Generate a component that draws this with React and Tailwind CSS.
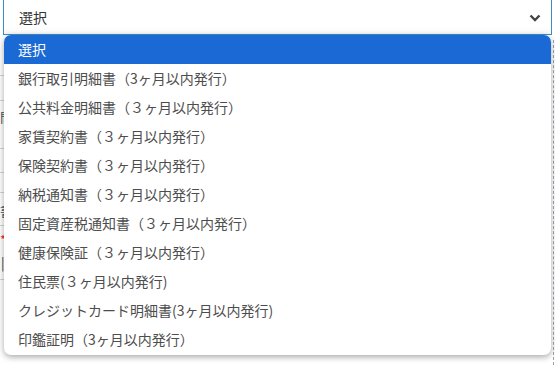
import React from "react";

const options = [
  "選択",
  "銀行取引明細書（3ヶ月以内発行）",
  "公共料金明細書（３ヶ月以内発行）",
  "家賃契約書（３ヶ月以内発行）",
  "保険契約書（３ヶ月以内発行）",
  "納税通知書（３ヶ月以内発行）",
  "固定資産税通知書（３ヶ月以内発行）",
  "健康保険証（３ヶ月以内発行）",
  "住民票(３ヶ月以内発行)",
  "クレジットカード明細書(3ヶ月以内発行)",
  "印鑑証明（3ヶ月以内発行）",
];

const App = () => {
  return (
    <div
      className="relative w-[555px] h-[365px] overflow-hidden bg-white text-[14px]"
      style={{ fontFamily: '"Noto Sans CJK JP", "Noto Sans", sans-serif' }}
    >
      {/* page behind the open list */}
      <div className="absolute left-0 top-[40px] w-[12px] flex flex-col text-[13px] text-gray-600">
        <div className="h-[36px] border-b border-gray-300" />
        <div className="h-[25px] border-b border-gray-300" />
        <div className="h-[48px] border-b border-gray-300 leading-[30px] pt-[1px]">問</div>
        <div className="h-[24px] border-b border-gray-300" />
        <div className="h-[20px] border-b border-gray-300" />
        <div className="h-[33px] border-b border-gray-300 leading-[36px]">書</div>
        <div className="h-[22px] text-red-500 leading-[28px]">*</div>
        <div className="h-[32px] border-b border-gray-300 pl-[1px] leading-[30px] text-gray-700">|</div>
      </div>
      <div className="absolute right-[1px] top-[40px] h-[325px] border-r border-dashed border-gray-400" />

      {/* select */}
      <div className="ml-[3px] mr-[3px] h-[35px] border border-t-0 border-[#3b8ec4] bg-white flex items-center justify-between pl-[15px] pr-[10px] shadow-[inset_0_-6px_8px_-6px_rgba(0,0,0,0.08)]">
        <span className="text-[#333]">選択</span>
        <svg width="12" height="8" viewBox="0 0 12 8" className="mt-[2px]">
          <path d="M1.5 1.5 L6 6 L10.5 1.5" fill="none" stroke="#444" strokeWidth="2.4" />
        </svg>
      </div>

      {/* open list */}
      <div className="absolute left-[4px] top-[35px] w-[547px] h-[320px] rounded-[7px] bg-white shadow-[0_2px_6px_rgba(0,0,0,0.35)] overflow-hidden flex flex-col">
        {options.map((o, i) => (
          <div
            key={i}
            className={
              i === 0
                ? "h-[29px] shrink-0 bg-[#1a69d4] text-white pl-[14px] flex items-center"
                : "h-[29px] shrink-0 text-[#4d4d4d] pl-[14px] flex items-center"
            }
          >
            {o}
          </div>
        ))}
      </div>
    </div>
  );
};

export default App;
